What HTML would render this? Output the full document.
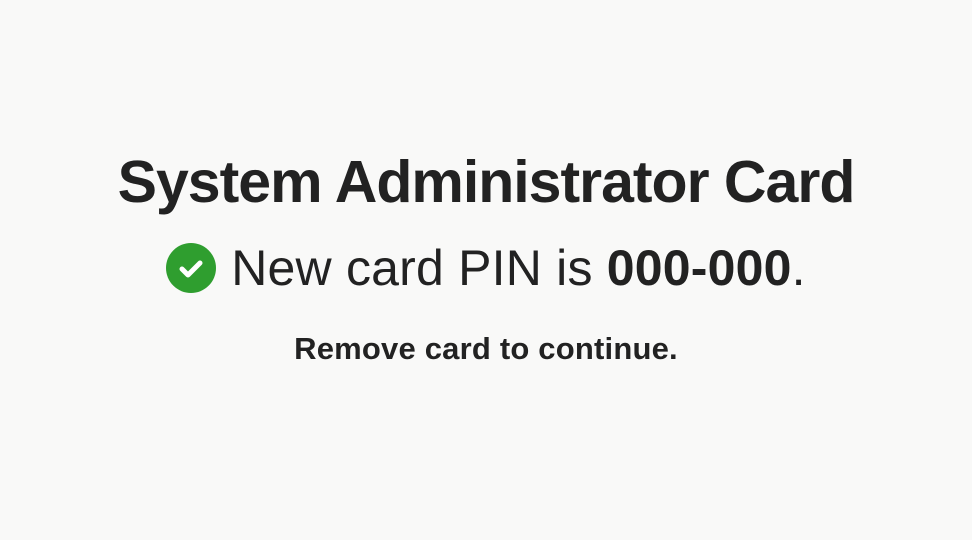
<!DOCTYPE html>
<html><head><style>
html,body{margin:0;padding:0;background:#f9f9f8;width:972px;height:540px;overflow:hidden;font-family:"Liberation Sans",Arial,sans-serif;color:#222;}
.l{position:absolute;left:0;width:972px;text-align:center;white-space:nowrap;}
.t{top:148px;font-size:59px;font-weight:bold;letter-spacing:-1px;}
.p{top:239px;font-size:50px;letter-spacing:0.2px;}
.r{top:331px;font-size:31px;font-weight:bold;letter-spacing:0.2px;}
.ic{display:inline-block;vertical-align:-8px;margin-right:15px;}
</style></head><body>
<div class="l t">System Administrator Card</div>
<div class="l p"><svg class="ic" width="50" height="50" viewBox="0 0 50 50"><circle cx="25" cy="25" r="25" fill="#2f9e2f"/><path d="M16 26 L22 32 L34 20" stroke="#fff" stroke-width="5" fill="none" stroke-linecap="round" stroke-linejoin="round"/></svg>New card PIN is <b>000-000</b>.</div>
<div class="l r">Remove card to continue.</div>
</body></html>
